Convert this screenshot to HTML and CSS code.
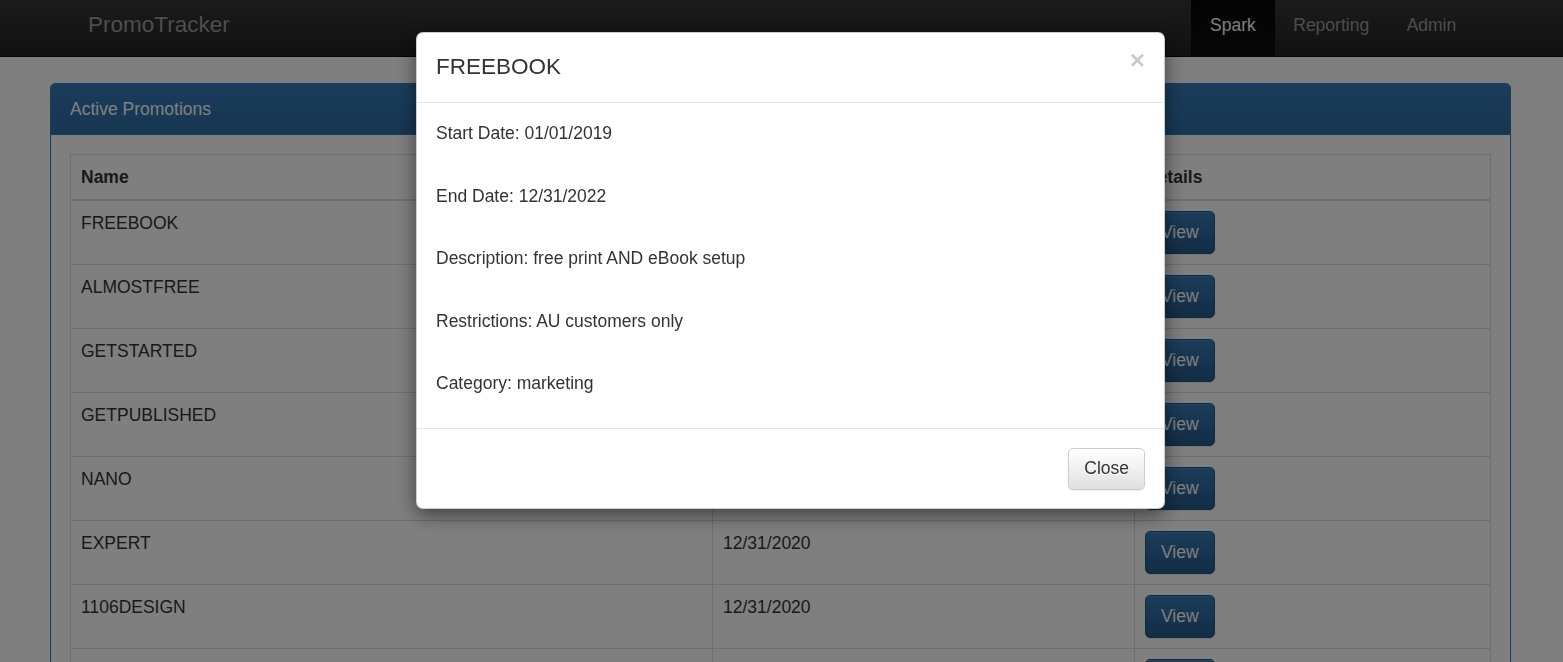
FILE: index.html
```html
<!DOCTYPE html>
<html lang="en">
<head>
<meta charset="utf-8">
<title>PromoTracker</title>
<link rel="stylesheet" href="styles.css">
</head>
<body>
<nav class="navbar">
  <a class="brand" href="#">PromoTracker</a>
  <ul class="nav">
    <li class="active"><a href="#">Spark</a></li>
    <li><a href="#">Reporting</a></li>
    <li><a href="#">Admin</a></li>
  </ul>
</nav>

<main class="main">
  <section class="panel">
    <div class="panel-heading">Active Promotions</div>
    <div class="panel-body">
      <table class="table">
        <colgroup>
          <col class="col-name">
          <col class="col-date">
          <col class="col-details">
        </colgroup>
        <thead>
          <tr><th>Name</th><th>End Date</th><th>Details</th></tr>
        </thead>
        <tbody>
          <tr><td>FREEBOOK</td><td>12/31/2022</td><td><button class="btn btn-primary">View</button></td></tr>
          <tr><td>ALMOSTFREE</td><td>12/31/2020</td><td><button class="btn btn-primary">View</button></td></tr>
          <tr><td>GETSTARTED</td><td>12/31/2020</td><td><button class="btn btn-primary">View</button></td></tr>
          <tr><td>GETPUBLISHED</td><td>12/31/2020</td><td><button class="btn btn-primary">View</button></td></tr>
          <tr><td>NANO</td><td>12/31/2020</td><td><button class="btn btn-primary">View</button></td></tr>
          <tr><td>EXPERT</td><td>12/31/2020</td><td><button class="btn btn-primary">View</button></td></tr>
          <tr><td>1106DESIGN</td><td>12/31/2020</td><td><button class="btn btn-primary">View</button></td></tr>
          <tr><td></td><td></td><td><button class="btn btn-primary btn-empty" aria-label="View"></button></td></tr>
        </tbody>
      </table>
    </div>
  </section>
</main>

<div class="backdrop"></div>

<div class="modal" role="dialog">
  <div class="modal-header">
    <button class="close" type="button">×</button>
    <h4 class="modal-title">FREEBOOK</h4>
  </div>
  <div class="modal-body">
    <p>Start Date: 01/01/2019</p>
    <p>End Date: 12/31/2022</p>
    <p>Description: free print AND eBook setup</p>
    <p>Restrictions: AU customers only</p>
    <p>Category: marketing</p>
  </div>
  <div class="modal-footer">
    <button class="btn btn-default" type="button">Close</button>
  </div>
</div>
</body>
</html>
```

FILE: styles.css
```css
* { box-sizing: border-box; }

html, body {
  margin: 0;
  height: 662px;
  overflow: hidden;
}

body {
  font-family: "Liberation Sans", Arial, Helvetica, sans-serif;
  font-size: 17.5px;
  line-height: 25px;
  color: #333;
  background: #fff;
}

/* Navbar */
.navbar {
  height: 57px;
  display: flex;
  justify-content: space-between;
  padding: 0 88px 0 69px;
  background: linear-gradient(to bottom, #363636 0, #222 100%);
  border-bottom: 1px solid #080808;
}

.brand {
  padding: 0 19px;
  font-size: 22.5px;
  line-height: 50px;
  color: #9d9d9d;
  text-decoration: none;
  text-shadow: 0 -1px 0 rgba(0,0,0,.25);
}

.nav {
  display: flex;
  list-style: none;
  margin: 0;
  padding: 0;
}

.nav li a {
  display: block;
  height: 56px;
  padding: 0 18.75px;
  line-height: 50px;
  color: #9d9d9d;
  text-decoration: none;
  text-shadow: 0 -1px 0 rgba(0,0,0,.25);
}

.nav li.active a {
  color: #fff;
  background: linear-gradient(to bottom, #080808 0, #0f0f0f 100%);
  box-shadow: inset 0 3px 9px rgba(0,0,0,.25);
}

/* Panel */
.main {
  padding: 26px 52px 0 50px;
}

.panel {
  border: 1px solid #337ab7;
  border-radius: 5px;
  background: #fff;
  box-shadow: 0 1px 2px rgba(0,0,0,.05);
}

.panel-heading {
  padding: 13px 19px 12px;
  line-height: 25px;
  color: #fff;
  background: linear-gradient(to bottom, #337ab7 0, #2e6da4 100%);
  border-bottom: 1px solid #337ab7;
  border-radius: 4px 4px 0 0;
}

.panel-body {
  padding: 19px;
}

/* Table */
.table {
  width: 100%;
  border-collapse: collapse;
  table-layout: fixed;
  border: 1px solid #ddd;
}

.col-name { width: 642px; }
.col-date { width: 422px; }

.table th,
.table td {
  padding: 10px;
  text-align: left;
  vertical-align: top;
  border: 1px solid #ddd;
  line-height: 25px;
}

.table thead th {
  padding-bottom: 9px;
  border-bottom: 2px solid #ddd;
  font-weight: bold;
}

/* Buttons */
.btn {
  display: inline-block;
  font-family: inherit;
  font-size: 17.5px;
  line-height: 25px;
  padding: 8px 15px;
  border: 1px solid transparent;
  border-radius: 5px;
  cursor: pointer;
  box-shadow: inset 0 1px 0 rgba(255,255,255,.15), 0 1px 1px rgba(0,0,0,.075);
}

.btn-primary {
  color: #fff;
  background: linear-gradient(to bottom, #337ab7 0, #265a88 100%);
  border-color: #245580;
  text-shadow: 0 -1px 0 rgba(0,0,0,.2);
}

.btn-empty {
  width: 70px;
  height: 43px;
}

.btn-default {
  padding: 7px 15px 8px;
  color: #333;
  background: linear-gradient(to bottom, #fff 0, #e0e0e0 100%);
  border-color: #ccc;
  text-shadow: 0 1px 0 #fff;
}

/* Backdrop + modal */
.backdrop {
  position: fixed;
  inset: 0;
  background: rgba(0,0,0,.5);
}

.modal {
  position: fixed;
  left: 416px;
  top: 32px;
  width: 749px;
  background: #fff;
  border: 1px solid rgba(0,0,0,.2);
  border-radius: 7px;
  box-shadow: 0 6px 19px rgba(0,0,0,.5);
}

.modal-header {
  padding: 18px 19px 19px;
  border-bottom: 1px solid #e5e5e5;
}

.modal-title {
  margin: 0;
  font-size: 22.5px;
  line-height: 32px;
  font-weight: normal;
  color: #333;
}

.close {
  float: right;
  margin-top: -4px;
  padding: 0;
  border: 0;
  background: transparent;
  font-family: inherit;
  font-size: 26px;
  font-weight: bold;
  line-height: 1;
  color: #000;
  opacity: .2;
  text-shadow: 0 1px 0 #fff;
  cursor: pointer;
}

.modal-body {
  padding: 18px 19px 19px;
}

.modal-body p {
  margin: 0 0 37.5px;
  line-height: 25px;
}

.modal-body p:last-child {
  margin-bottom: 12.5px;
}

.modal-footer {
  padding: 19px 19px 18px;
  text-align: right;
  border-top: 1px solid #e5e5e5;
}
```
